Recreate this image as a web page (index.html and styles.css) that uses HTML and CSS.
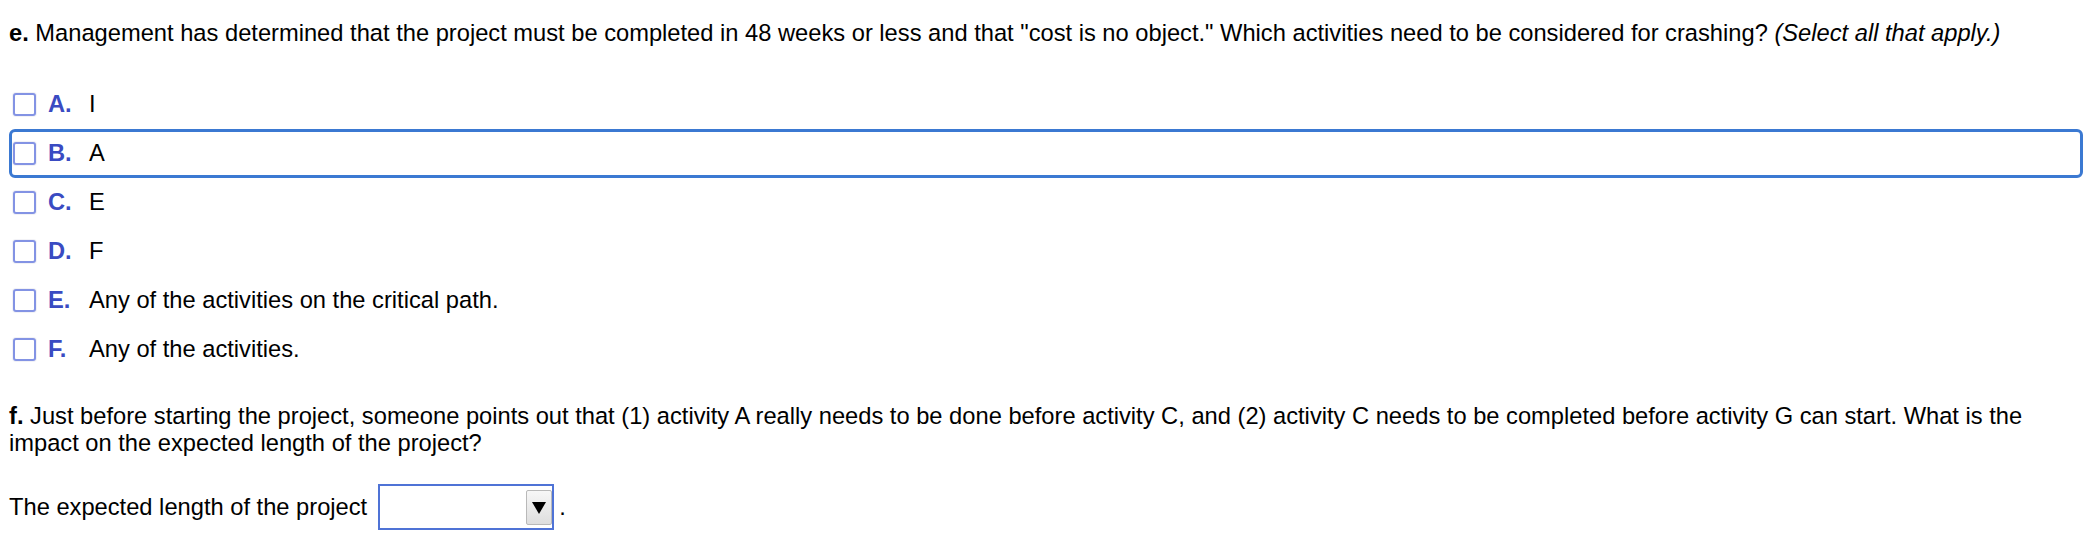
FILE: index.html
```html
<!DOCTYPE html>
<html lang="en">
<head>
<meta charset="utf-8">
<title>Question</title>
<link rel="stylesheet" href="styles.css">
</head>
<body>
<div class="page">
  <p class="question q-e"><b>e.</b> Management has determined that the project must be completed in 48 weeks or less and that "cost is no object." Which activities need to be considered for crashing? <i>(Select all that apply.)</i></p>

  <div class="options">
    <div class="option"><span class="box"></span><span class="letter">A.</span><span class="text">I</span></div>
    <div class="option focused"><span class="box"></span><span class="letter">B.</span><span class="text">A</span></div>
    <div class="option"><span class="box"></span><span class="letter">C.</span><span class="text">E</span></div>
    <div class="option"><span class="box"></span><span class="letter">D.</span><span class="text">F</span></div>
    <div class="option"><span class="box"></span><span class="letter">E.</span><span class="text">Any of the activities on the critical path.</span></div>
    <div class="option"><span class="box"></span><span class="letter">F.</span><span class="text">Any of the activities.</span></div>
  </div>

  <p class="question q-f">f. Just before starting the project, someone points out that (1) activity A really needs to be done before activity C, and (2) activity C needs to be completed before activity G can start. What is the impact on the expected length of the project?</p>

  <div class="answer-row">
    <span class="answer-text">The expected length of the project</span>
    <span class="dropdown"><span class="dd-button"><svg width="14" height="14" viewBox="0 0 14 14"><polygon points="0,1 14,1 7,13" fill="#000"/></svg></span></span>
    <span class="period">.</span>
  </div>
</div>
</body>
</html>
```

FILE: styles.css
```css
html, body {
  margin: 0;
  padding: 0;
  background: #ffffff;
}

.page {
  padding: 0 5px 0 9px;
  font-family: "Liberation Sans", Arial, sans-serif;
  font-size: 23.7px;
  line-height: 27px;
  color: #000;
}

.question {
  margin: 0;
}

.q-e {
  padding-top: 20px;
}

.options {
  margin-top: 33px;
  display: flex;
  flex-direction: column;
}

.option {
  height: 49px;
  box-sizing: border-box;
  border: 3px solid transparent;
  border-radius: 6px;
  display: flex;
  align-items: center;
  padding-left: 1px;
}

.option.focused {
  border-color: #3b79d2;
}

.box {
  width: 23px;
  height: 23px;
  box-sizing: border-box;
  border: 2px solid #8393e4;
  border-radius: 3px;
  background: #fff;
  box-shadow: 0 0 0 1px #f2f2f6;
  flex: none;
}

.letter {
  margin-left: 12px;
  width: 41px;
  font-weight: bold;
  color: #3a4bc2;
  flex: none;
}

.text {
  color: #000;
}

.q-f {
  margin-top: 29px;
}

.q-f::first-letter {
  font-weight: bold;
}

.answer-row {
  margin-top: 27px;
  display: flex;
  align-items: center;
}

.dropdown {
  margin-left: 11px;
  width: 176px;
  height: 46px;
  box-sizing: border-box;
  border: 2px solid #4f73d6;
  background: #fff;
  display: flex;
  justify-content: flex-end;
  align-items: center;
}

.dd-button {
  width: 26px;
  height: 35px;
  box-sizing: border-box;
  border: 1px solid #b9b9b9;
  border-radius: 2px;
  background: linear-gradient(#f7f7f7, #dedede);
  display: flex;
  align-items: center;
  justify-content: center;
  margin-top: 1px;
}

.dd-button svg {
  display: block;
}

.period {
  margin-left: 5px;
}
```
